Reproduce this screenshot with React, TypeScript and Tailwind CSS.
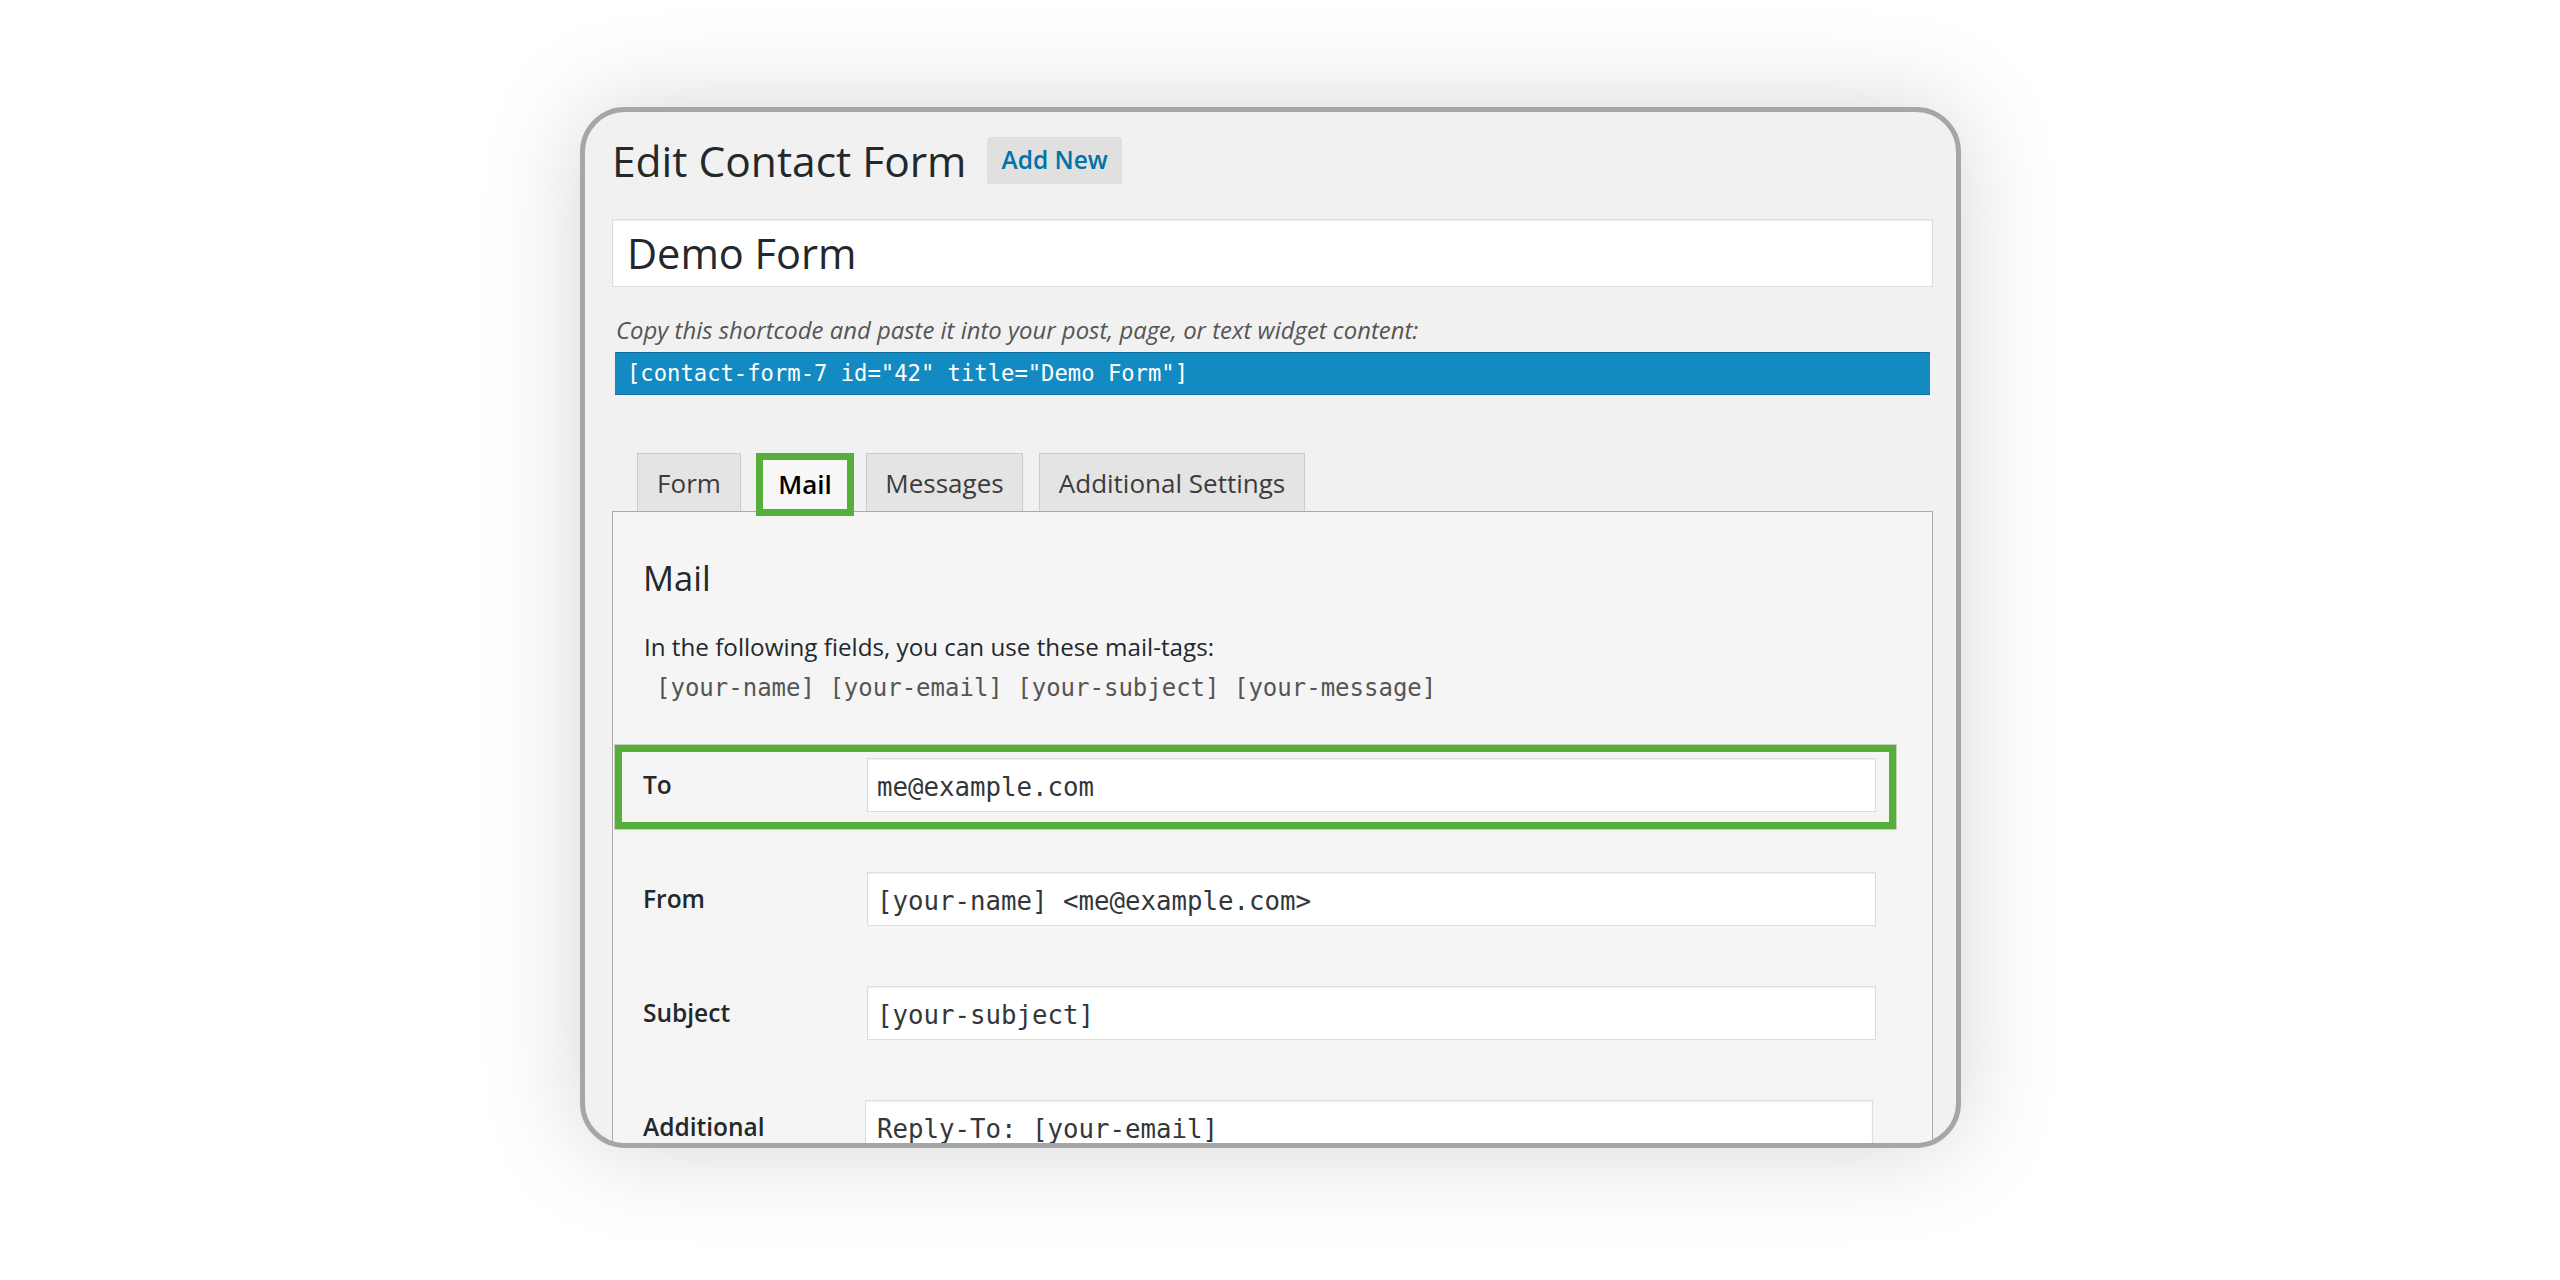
import React from "react";

const sans = "font-['Open_Sans',sans-serif]";
const mono = "font-['DejaVu_Sans_Mono',monospace]";

type Row = {
  label: string;
  value: string;
  active?: boolean;
  multiline?: boolean;
};

const rows: Row[] = [
  { label: "To", value: "me@example.com", active: true },
  { label: "From", value: "[your-name] <me@example.com>" },
  { label: "Subject", value: "[your-subject]" },
  { label: "Additional", value: "Reply-To: [your-email]", multiline: true },
];

function Tab({ label, width, gap }: { label: string; width: string; gap: string }) {
  return (
    <div
      className={`${width} ${gap} h-[58px] flex items-center justify-center bg-[#e4e4e4] border border-b-0 border-[#cccccc] text-[26px] text-[#3c3c3c] leading-none`}
    >
      {label}
    </div>
  );
}

function MailRow({ row, first }: { row: Row; first: boolean }) {
  return (
    <div
      className={`flex items-start w-[1281px] ml-[2px] border-[7px] pt-[6px] pb-[10px] pl-[21px] pr-[13px] ${
        row.active ? "border-[#56ae3b] shadow-[0_0_0_1px_rgba(40,110,30,0.25)]" : "border-transparent"
      } ${first ? "mt-[41px]" : "mt-[30px]"}`}
    >
      {row.multiline ? (
        <div className="w-[224px] pt-[9px] text-[24.5px] leading-[36px] font-semibold text-[#23282d]">
          {row.label}
        </div>
      ) : (
        <div className="w-[224px] h-[54px] flex items-center text-[24.5px] font-semibold text-[#23282d]">
          {row.label}
        </div>
      )}
      {row.multiline ? (
        <div
          className={`flex-1 -ml-[2px] mr-[3px] h-[190px] bg-white border border-[#dddddd] shadow-[inset_0_1px_2px_rgba(0,0,0,0.07)] pl-[11px] pt-[10px] ${mono} text-[25.75px] leading-[36px] text-[#32373c] whitespace-pre`}
        >
          {row.value}
        </div>
      ) : (
        <div
          className={`flex-1 h-[54px] flex items-center bg-white border border-[#dddddd] shadow-[inset_0_1px_2px_rgba(0,0,0,0.07)] pl-[9px] pt-[4px] ${mono} text-[25.75px] text-[#32373c] whitespace-pre`}
        >
          {row.value}
        </div>
      )}
    </div>
  );
}

export default function App() {
  return (
    <div className={`w-[2560px] h-[1280px] bg-white pt-[107px] pl-[580px] ${sans}`}>
      <div className="w-[1381px] h-[1041px] rounded-[45px] border-[5px] border-[#a6a6a6] bg-[#f1f1f1] overflow-hidden shadow-[0_0_100px_rgba(0,0,0,0.17)] pl-[27px] pr-[23px] pt-[25px]">
        {/* page heading */}
        <div className="flex items-center h-[47px]">
          <h1 className="text-[42.5px] leading-[47px] font-normal text-[#23282d]">Edit Contact Form</h1>
          <div className="ml-[21px] h-[47px] px-[14px] flex items-center bg-[#e0e0e0] rounded-[3px] text-[24.5px] font-semibold text-[#0073aa]">
            Add New
          </div>
        </div>

        {/* form title */}
        <div className="mt-[35px] h-[68px] bg-white border border-[#dddddd] shadow-[inset_0_1px_2px_rgba(0,0,0,0.07)] flex items-center pl-[14px] text-[41.5px] text-[#23282d]">
          Demo Form
        </div>

        {/* shortcode */}
        <p className="mt-[28px] pl-[4px] text-[23.9px] leading-[30px] italic text-[#555555]">
          Copy this shortcode and paste it into your post, page, or text widget content:
        </p>
        <div
          className={`mt-[7px] mx-[3px] h-[43px] bg-[#138bc2] border-y border-[#0d6f9e] flex items-center pl-[12px] pt-[1px] ${mono} text-[22.2px] text-white whitespace-pre`}
        >
          [contact-form-7 id="42" title="Demo Form"]
        </div>

        {/* tabs */}
        <div className="mt-[58px] flex items-end h-[58px]">
          <Tab label="Form" width="w-[104px]" gap="ml-[25px]" />
          <div className="relative z-10 ml-[15px] -mb-[5px] w-[98px] h-[63px] border-[7px] border-[#56ae3b] bg-[#f7f7f7] flex items-center justify-center pb-[2px] text-[26px] font-semibold text-black leading-none">
            Mail
          </div>
          <Tab label="Messages" width="w-[157px]" gap="ml-[12px]" />
          <Tab label="Additional Settings" width="w-[266px]" gap="ml-[16px]" />
        </div>

        {/* mail panel */}
        <div className="border border-[#aaaaaa] bg-[#f5f5f5] h-[700px]">
          <h2 className="mt-[44px] pl-[30px] text-[34.5px] leading-[44px] font-normal text-[#23282d]">Mail</h2>
          <div className="mt-[28px] pl-[31px] text-[24.2px] leading-[38px] text-[#23282d]">
            In the following fields, you can use these mail-tags:
          </div>
          <div className={`pl-[43px] pt-[3px] h-[38px] leading-[38px] ${mono} text-[24px] text-[#555555] whitespace-pre`}>
            [your-name] [your-email] [your-subject] [your-message]
          </div>
          {rows.map((r, i) => (
            <MailRow key={r.label} row={r} first={i === 0} />
          ))}
        </div>
      </div>
    </div>
  );
}
